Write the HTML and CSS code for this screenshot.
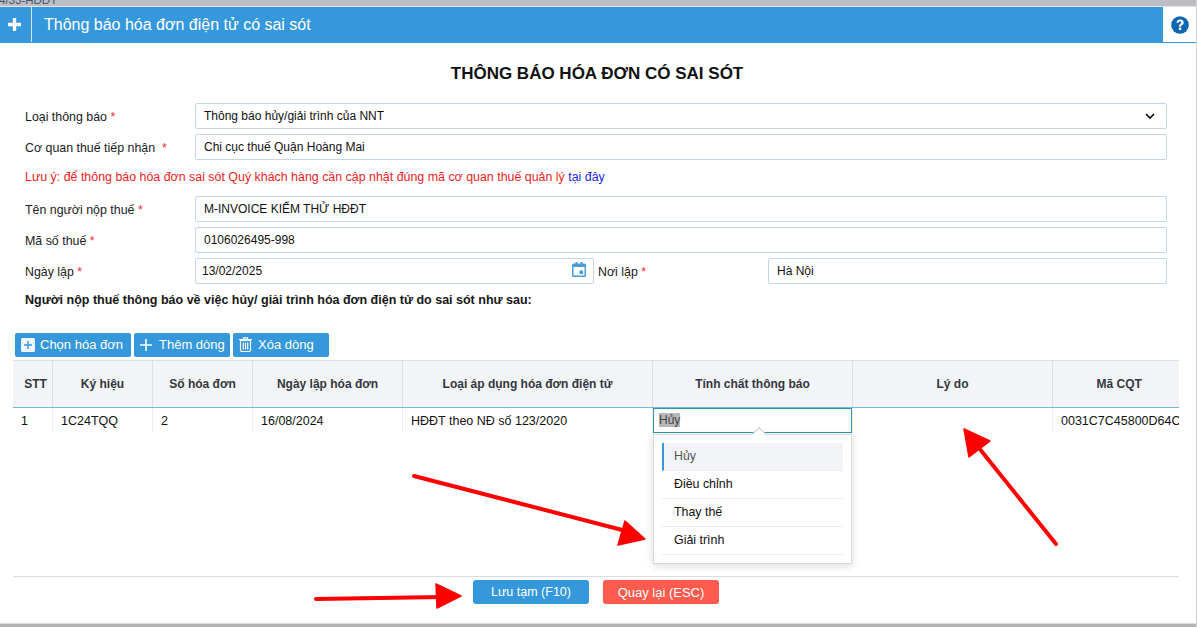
FILE: index.html
```html
<!DOCTYPE html>
<html lang="vi">
<head>
<meta charset="utf-8">
<title>Thông báo hóa đơn có sai sót</title>
<link rel="stylesheet" href="styles.css">
</head>
<body>
<div class="page">
  <div class="topstrip"><span>4/33-HDDT</span></div>
  <header class="titlebar">
    <div class="plus"><svg width="13" height="13" viewBox="0 0 14 14"><path d="M5.2 0h3.600v5.200H14v3.600H8.800V14H5.200V8.800H0V5.200h5.200z" fill="#fff"/></svg></div>
    <div class="titletext">Thông báo hóa đơn điện tử có sai sót</div>
    <div class="help"><svg width="18" height="18" viewBox="0 0 18 18"><circle cx="9" cy="9" r="8.800" fill="#0f67b1"/><path d="M5.500 6.800C5.700 4.700 7.200 3.500 9.200 3.500c2 0 3.500 1.200 3.500 3 0 1.400-.8 2.100-1.700 2.700-.7.500-.9.800-.9 1.500H7.900c0-1.400.4-2.100 1.300-2.700.7-.5 1.100-.8 1.100-1.400 0-.6-.5-1-1.200-1-.8 0-1.300.5-1.400 1.200z" fill="#fff"/><rect x="7.900" y="11.600" width="2.300" height="2.400" fill="#fff"/></svg></div>
  </header>

  <main class="content">
    <h1 class="heading">THÔNG BÁO HÓA ĐƠN CÓ SAI SÓT</h1>

    <div class="row">
      <label class="label">Loại thông báo <em>*</em></label>
      <div class="field select"><span>Thông báo hủy/giải trình của NNT</span>
        <svg width="10" height="6" viewBox="0 0 10 6"><path d="M1 1l4 4 4-4" fill="none" stroke="#111" stroke-width="1.700"/></svg>
      </div>
    </div>
    <div class="row">
      <label class="label">Cơ quan thuế tiếp nhận &nbsp;<em>*</em></label>
      <div class="field">Chi cục thuế Quận Hoàng Mai</div>
    </div>
    <p class="note">Lưu ý: để thông báo hóa đơn sai sót Quý khách hàng cần cập nhật đúng mã cơ quan thuế quản lý <a href="#">tại đây</a></p>
    <div class="row">
      <label class="label">Tên người nộp thuế <em>*</em></label>
      <div class="field">M-INVOICE KIỂM THỬ HĐĐT</div>
    </div>
    <div class="row">
      <label class="label">Mã số thuế <em>*</em></label>
      <div class="field">0106026495-998</div>
    </div>
    <div class="row">
      <label class="label">Ngày lập <em>*</em></label>
      <div class="field date"><span>13/02/2025</span>
        <svg width="14" height="15" viewBox="0 0 14 15"><path d="M1.500 1.500h2V0h2v1.500h3V0h2v1.500h2A1.500 1.500 0 0 1 14 3v10.500A1.500 1.500 0 0 1 12.500 15h-11A1.500 1.500 0 0 1 0 13.500V3a1.500 1.500 0 0 1 1.500-1.500z" fill="#4a9bd8"/><rect x="1.500" y="5" width="11" height="8.500" fill="#fff"/><rect x="7.500" y="8.500" width="3.500" height="3.500" fill="#4a9bd8"/></svg>
      </div>
      <label class="label-inline">Nơi lập <em>*</em></label>
      <div class="field place">Hà Nội</div>
    </div>
    <p class="subhead">Người nộp thuế thông báo về việc hủy/ giải trình hóa đơn điện tử do sai sót như sau:</p>

    <div class="toolbar">
      <button class="tool t1" type="button"><svg width="14" height="14" viewBox="0 0 14 14"><rect width="14" height="14" rx="1.500" fill="#fff" opacity=".92"/><path d="M6.300 3h1.400v3.300H11v1.400H7.700V11H6.300V7.700H3V6.300h3.300z" fill="#3498db"/></svg>Chọn hóa đơn</button>
      <button class="tool t2" type="button"><svg width="12" height="12" viewBox="0 0 12 12"><path d="M5.200 0h1.600v5.200H12v1.600H6.800V12H5.200V6.800H0V5.200h5.200z" fill="#fff"/></svg>Thêm dòng</button>
      <button class="tool t3" type="button"><svg width="13" height="15" viewBox="0 0 13 15"><path d="M0 2.500h13M4.500 2.500V.8h4v1.700" fill="none" stroke="#fff" stroke-width="1.200"/><path d="M1.500 3.500h10V13a1.500 1.500 0 0 1-1.500 1.500H3A1.500 1.500 0 0 1 1.500 13z" fill="none" stroke="#fff" stroke-width="1.200"/><path d="M4.300 5.500v7M6.500 5.500v7M8.700 5.500v7" stroke="#fff" stroke-width="1.200"/></svg>Xóa dòng</button>
    </div>

    <div class="tablewrap">
      <table class="grid">
        <colgroup>
          <col class="c-stt"><col class="c-kh"><col class="c-so"><col class="c-ngay"><col class="c-loai"><col class="c-tc"><col class="c-ly"><col class="c-ma">
        </colgroup>
        <thead>
          <tr><th>STT</th><th>Ký hiệu</th><th>Số hóa đơn</th><th>Ngày lập hóa đơn</th><th>Loại áp dụng hóa đơn điện tử</th><th>Tính chất thông báo</th><th>Lý do</th><th>Mã CQT</th></tr>
        </thead>
        <tbody>
          <tr><td>1</td><td>1C24TQQ</td><td>2</td><td>16/08/2024</td><td>HĐĐT theo NĐ số 123/2020</td><td class="editing"><div class="editor"><mark>Hủy</mark></div></td><td></td><td class="last">0031C7C45800D64C</td></tr>
        </tbody>
      </table>
    </div>
  </main>

  <footer class="footer">
    <button class="btn save" type="button">Lưu tạm (F10)</button>
    <button class="btn back" type="button">Quay lại (ESC)</button>
  </footer>
  <div class="bottomstrip"></div>

  <div class="dropdown">
    <span class="caret"></span>
    <ul>
      <li class="active">Hủy</li>
      <li>Điều chỉnh</li>
      <li>Thay thế</li>
      <li>Giải trình</li>
    </ul>
  </div>

  <svg class="arrows" width="1197" height="627" viewBox="0 0 1197 627">
    <g fill="#fe0000" stroke="#fe0000" stroke-linecap="round" stroke-linejoin="round">
      <path d="M414 476L630 532" stroke-width="4" fill="none"/>
      <path d="M625 521L645 539 618 545z" stroke-width="1.500"/>
      <path d="M316 599L442 597" stroke-width="4" fill="none"/>
      <path d="M436 584L461 596 437 608z" stroke-width="1.500"/>
      <path d="M1056 544L979 448" stroke-width="4" fill="none"/>
      <path d="M964 429L990 441 969 457z" stroke-width="1.500"/>
    </g>
  </svg>
</div>
</body>
</html>
```
FILE: styles.css
```css
* { box-sizing: border-box; }
html, body { margin: 0; padding: 0; background: #fff; }
body { font-family: "Liberation Sans", Arial, sans-serif; font-size: 12px; color: #111; }
.page { position: relative; width: 1197px; height: 627px; overflow: hidden; display: flex; flex-direction: column; border-right: 1px solid #d4d4d6; }

.topstrip { height: 7px; flex: none; background: #bcbec3; border-bottom: 1px solid #e4e5e8; overflow: hidden; }
.topstrip span { display: block; margin: -7px 0 0 -1px; font-size: 11.500px; line-height: 14px; color: #44566c; }

.titlebar { height: 36px; flex: none; background: #3498db; display: flex; align-items: stretch; color: #fff; }
.plus { width: 32px; height: 35px; display: flex; align-items: center; justify-content: center; border-right: 1px solid #d6e9f7; padding-right: 2px; }
.titletext { flex: 1; font-size: 16px; line-height: 36px; padding-left: 12px; }
.help { width: 33px; height: 35px; background: #fff; display: flex; align-items: center; justify-content: center; }

.content { flex: 1; padding: 0 0 0 13px; min-height: 0; display: flex; flex-direction: column; }
.heading { margin: 21px 0 0; height: 20px; line-height: 20px; font-size: 17px; font-weight: bold; text-align: center; color: #111; padding-right: 15px; }
.row { display: flex; align-items: center; height: 26px; margin-top: 5px; padding-left: 12px; padding-right: 29px; }
.heading + .row { margin-top: 19px; }
.label { width: 170px; flex: none; padding-top: 1px; color: #1c1c1c; font-size: 12.400px; }
.label em, .label-inline em { font-style: normal; color: #f1303a; }
.label-inline { width: 174px; flex: none; padding-left: 4px; color: #1c1c1c; padding-top: 1px; font-size: 12.400px; }
.field { flex: 1; height: 26px; line-height: 25px; padding-left: 8px; border: 1px solid #c8d5e4; border-radius: 2px; color: #111; background: #fff; }
.select { display: flex; align-items: center; justify-content: space-between; padding-right: 11px; line-height: 1; }
.date { flex: none; width: 399px; display: flex; justify-content: space-between; padding-left: 6px; padding-right: 7px; }
.date svg { margin-top: 3px; }
.note { margin: 10px 0 12px; height: 14px; line-height: 14px; padding-left: 12px; color: #f01d24; font-size: 12.420px; }
.note + .row { margin-top: 0; }
.note a { color: #1f1fe0; text-decoration: none; }
.subhead { margin: 9px 0 0; padding-left: 12px; height: 14px; line-height: 14px; font-weight: bold; color: #161616; font-size: 12.500px; }

.toolbar { display: flex; gap: 3px; margin: 26px 0 0 2px; height: 24px; }
.tool { height: 24px; border: 0; border-radius: 2px; background: #3498db; color: #fff; font: inherit; font-size: 13px; line-height: 22px; display: flex; align-items: center; padding: 0 0 1px 6px; }
.t1 { width: 116px; gap: 5px; }
.t2 { width: 96px; gap: 7px; }
.t3 { width: 96px; gap: 6px; }

.tablewrap { margin: 3px 17px 0 0; height: 73px; overflow: hidden; }
.grid { table-layout: fixed; border-collapse: collapse; width: 1173px; }
.c-stt { width: 39.500px; } .c-kh { width: 100px; } .c-so { width: 100px; } .c-ngay { width: 150px; }
.c-loai { width: 250px; } .c-tc { width: 200px; } .c-ly { width: 200px; } .c-ma { width: 133.500px; }
.grid th { height: 47px; background: #f2f4f8; border: 1px solid #dbdfe6; border-bottom: 1px solid #6cbbd9; font-weight: bold; color: #33373f; text-align: center; padding: 0; }
.grid th:first-child { padding-left: 6px; border-left: 0; }
.grid td:first-child { border-left: 0; }
.grid td { height: 26px; padding: 0 8px; border: 1px solid #eceef1; border-top: 0; white-space: nowrap; overflow: hidden; color: #111; font-size: 12.500px; }
.grid td.last { padding-right: 0; border-right: 0; }
.grid td.editing { padding: 0; border-left: 0; }
.editor { height: 25px; border: 1px solid #2f93b4; padding-left: 5px; line-height: 23px; color: #444; font-size: 12px; }
.editor mark { background: #b8b8b8; color: #444; }

.footer { flex: none; height: 47px; margin: 0 17px 0 13px; border-top: 1px solid #dadde3; display: flex; justify-content: center; gap: 14px; padding-top: 3px; }
.btn { width: 116px; height: 24px; border: 0; border-radius: 3px; color: #fff; font: inherit; padding: 0; }
.save { background: #3498db; font-size: 12.500px; }
.back { background: #ff5b4e; font-size: 13px; }
.bottomstrip { height: 4px; flex: none; background: #b3b3b3; border-top: 1px solid #dcdcdc; }

.dropdown { position: absolute; left: 653px; top: 434px; width: 199px; height: 130px; background: #fff; border: 1px solid #d6d9dd; box-shadow: 0 2px 8px rgba(0,0,0,.14); padding: 8px; }
.caret { position: absolute; left: 100px; top: -6px; width: 10px; height: 10px; background: #fff; border-left: 1px solid #c9ccd1; border-top: 1px solid #c9ccd1; transform: rotate(45deg); }
.dropdown ul { list-style: none; margin: 0; padding: 0; }
.dropdown li { height: 28px; line-height: 27px; padding-left: 12px; border-bottom: 1px solid #eceef1; color: #111; font-size: 12.400px; }
.dropdown li.active { background: #f2f4f8; border-left: 2px solid #3498db; padding-left: 10px; color: #555; }

.arrows { position: absolute; left: 0; top: 0; pointer-events: none; }
```
